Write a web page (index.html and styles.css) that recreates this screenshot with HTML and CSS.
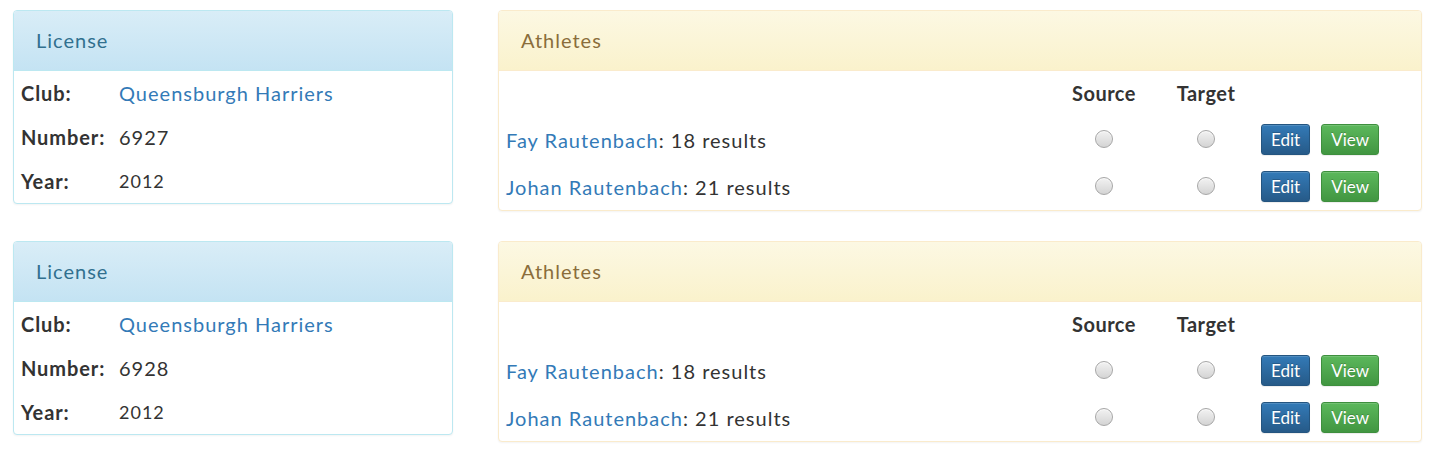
FILE: index.html
```html
<!DOCTYPE html>
<html lang="en">
<head>
<meta charset="utf-8">
<title>Licenses</title>
<link rel="stylesheet" href="styles.css">
</head>
<body>
<div class="page">
  <div class="row">
    <section class="panel panel-info license">
      <div class="panel-heading">License</div>
      <div class="kv">
        <div class="k">Club:</div><div class="v"><a href="#">Queensburgh Harriers</a></div>
        <div class="k">Number:</div><div class="v">6927</div>
        <div class="k">Year:</div><div class="v year">2012</div>
      </div>
    </section>
    <section class="panel panel-warning athletes">
      <div class="panel-heading">Athletes</div>
      <div class="grid">
        <div class="c th"></div><div class="c th center">Source</div><div class="c th center">Target</div><div class="c th"></div>
        <div class="c name"><a href="#">Fay Rautenbach</a>: 18 results</div>
        <div class="c center"><input type="radio" name="s1" class="radio"></div>
        <div class="c center"><input type="radio" name="t1" class="radio"></div>
        <div class="c actions"><a class="btn btn-primary" href="#">Edit</a><a class="btn btn-success" href="#">View</a></div>
        <div class="c name"><a href="#">Johan Rautenbach</a>: 21 results</div>
        <div class="c center"><input type="radio" name="s1" class="radio"></div>
        <div class="c center"><input type="radio" name="t1" class="radio"></div>
        <div class="c actions"><a class="btn btn-primary" href="#">Edit</a><a class="btn btn-success" href="#">View</a></div>
      </div>
    </section>
  </div>
  <div class="row">
    <section class="panel panel-info license">
      <div class="panel-heading">License</div>
      <div class="kv">
        <div class="k">Club:</div><div class="v"><a href="#">Queensburgh Harriers</a></div>
        <div class="k">Number:</div><div class="v">6928</div>
        <div class="k">Year:</div><div class="v year">2012</div>
      </div>
    </section>
    <section class="panel panel-warning athletes">
      <div class="panel-heading">Athletes</div>
      <div class="grid">
        <div class="c th"></div><div class="c th center">Source</div><div class="c th center">Target</div><div class="c th"></div>
        <div class="c name"><a href="#">Fay Rautenbach</a>: 18 results</div>
        <div class="c center"><input type="radio" name="s2" class="radio"></div>
        <div class="c center"><input type="radio" name="t2" class="radio"></div>
        <div class="c actions"><a class="btn btn-primary" href="#">Edit</a><a class="btn btn-success" href="#">View</a></div>
        <div class="c name"><a href="#">Johan Rautenbach</a>: 21 results</div>
        <div class="c center"><input type="radio" name="s2" class="radio"></div>
        <div class="c center"><input type="radio" name="t2" class="radio"></div>
        <div class="c actions"><a class="btn btn-primary" href="#">Edit</a><a class="btn btn-success" href="#">View</a></div>
      </div>
    </section>
  </div>
</div>
</body>
</html>
```

FILE: styles.css
```css
* { box-sizing: border-box; }
html, body { margin: 0; padding: 0; background: #fff; }
body {
  font-family: Lato, "Open Sans", "DejaVu Sans", sans-serif;
  font-size: 20px;
  line-height: 1.42857;
  color: #333;
  letter-spacing: 1px;
}
a { color: #337ab7; text-decoration: none; }
.page { padding: 10px 14px 0 13px; }
.row { display: flex; align-items: flex-start; gap: 45px; margin-bottom: 30px; }
.panel {
  background: #fff;
  border: 1px solid transparent;
  border-radius: 4px;
  box-shadow: 0 1px 2px rgba(0,0,0,.05);
  overflow: hidden;
}
.license { width: 440px; flex: none; }
.athletes { flex: 1; }
.panel-heading {
  padding: 15px 22px;
  line-height: 29px;
  font-size: 20px;
  border-bottom: 1px solid transparent;
}
.panel-info { border-color: #bce8f1; }
.panel-info .panel-heading {
  color: #31708f;
  background: linear-gradient(to bottom, #d9edf7 0%, #c4e3f3 100%);
  border-bottom-color: #bce8f1;
}
.panel-warning { border-color: #faebcc; }
.panel-warning .panel-heading {
  color: #8a6d3b;
  background: linear-gradient(to bottom, #fcf8e3 0%, #faf2cc 100%);
  border-bottom-color: #faebcc;
}
.kv { display: grid; grid-template-columns: 98px 1fr; }
.k, .v { padding: 8px 7px; line-height: 28px; }
.k { font-weight: 700; letter-spacing: 0.9px; }
.year { font-size: 18px; }
.grid { display: grid; grid-template-columns: 1fr 104px 100px 165px; }
.c { padding: 8px 7px; line-height: 28px; display: flex; align-items: center; }
.center { justify-content: center; }
.th { font-weight: 700; letter-spacing: 0.5px; padding-bottom: 9px; }
.radio {
  appearance: none;
  -webkit-appearance: none;
  width: 18px; height: 18px;
  margin: -1px 0 0 0;
  border-radius: 50%;
  border: 1px solid #a6a6a6;
  background: linear-gradient(to bottom, #f2f2f2 0%, #d4d4d4 100%);
  box-shadow: inset 0 1px 1px rgba(255,255,255,.7);
}
.actions { padding-left: 5px; gap: 11px; }
.btn {
  display: inline-block;
  padding: 5px 9px;
  font-size: 17px;
  line-height: 19px;
  letter-spacing: 0;
  border: 1px solid transparent;
  border-radius: 3px;
  color: #fff;
  text-shadow: 0 -1px 0 rgba(0,0,0,.2);
  box-shadow: inset 0 1px 0 rgba(255,255,255,.15), 0 1px 1px rgba(0,0,0,.075);
}
.btn-primary { background: linear-gradient(to bottom, #337ab7 0%, #265a88 100%); border-color: #245580; }
.btn-success { background: linear-gradient(to bottom, #5cb85c 0%, #419641 100%); border-color: #3e8f3e; }
```
